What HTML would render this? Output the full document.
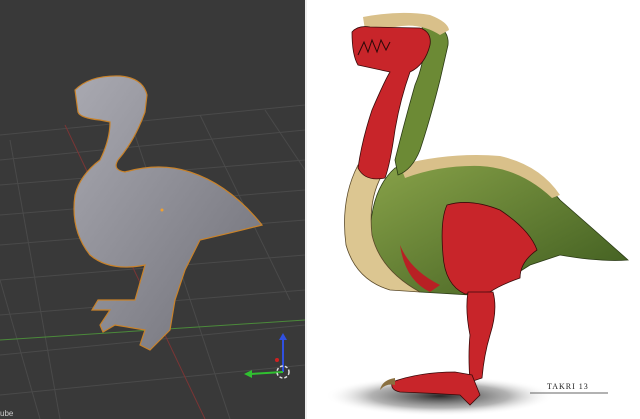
<!DOCTYPE html>
<html><head><style>
html,body{margin:0;padding:0;width:640px;height:419px;overflow:hidden;background:#fff;font-family:"Liberation Sans",sans-serif}
</style></head><body>
<svg width="640" height="419" viewBox="0 0 640 419" xmlns="http://www.w3.org/2000/svg">
<defs>
<linearGradient id="g1" x1="0" y1="0" x2="1" y2="1"><stop offset="0" stop-color="#a9a9b1"/><stop offset="1" stop-color="#6f6f77"/></linearGradient>
<radialGradient id="sh" cx="0.5" cy="0.5" r="0.5"><stop offset="0" stop-color="#111" stop-opacity="0.9"/><stop offset="0.6" stop-color="#666" stop-opacity="0.5"/><stop offset="1" stop-color="#fff" stop-opacity="0"/></radialGradient>
<linearGradient id="gr" x1="0" y1="0" x2="1" y2="1"><stop offset="0" stop-color="#8aa44a"/><stop offset="1" stop-color="#3d5a1e"/></linearGradient>
</defs>
<rect x="0" y="0" width="305" height="419" fill="#393939"/>
<g stroke="#4a4a4a" stroke-width="1" fill="none">
<path d="M0 135 L305 105"/><path d="M0 160 L305 130"/><path d="M0 185 L305 160"/><path d="M0 215 L305 190"/><path d="M0 245 L305 220"/><path d="M0 280 L305 255"/><path d="M0 315 L305 290"/><path d="M0 355 L305 325"/><path d="M0 395 L305 365"/>
<path d="M10 140 L60 419"/><path d="M130 120 L230 419"/><path d="M200 115 L290 300"/><path d="M265 110 L305 170"/><path d="M0 280 L40 419"/>
</g>
<path d="M65 125 L205 419" stroke="#7a3535" stroke-width="1"/>
<path d="M0 340 L305 320" stroke="#4b8a3a" stroke-width="1"/>
<path d="M75 90 Q90 75 120 76 Q143 78 147 95 L145 112 Q135 140 118 160 Q112 170 125 172 Q160 162 190 172 Q230 185 262 225 Q235 232 200 240 L185 270 L175 300 L170 330 L150 350 L140 345 L145 330 L115 325 L103 332 L100 325 L110 310 L92 310 L98 300 L135 300 L145 265 Q110 272 90 255 Q70 230 75 195 Q80 175 100 160 Q110 140 110 122 L100 120 Q80 118 78 112 Z" fill="url(#g1)" stroke="#c8822a" stroke-width="1.2"/>
<circle cx="162" cy="210" r="1.5" fill="#f0a030"/>
<line x1="283" y1="372" x2="283" y2="337" stroke="#3050e0" stroke-width="2"/>
<polygon points="279,340 283,333 287,340" fill="#3050e0"/>
<line x1="283" y1="372" x2="250" y2="374" stroke="#30c030" stroke-width="2"/>
<polygon points="252,370 244,374 252,378" fill="#30c030"/>
<circle cx="277" cy="360" r="2" fill="#d02020"/>
<circle cx="283" cy="372" r="6" fill="none" stroke="#ddd" stroke-width="1.5" stroke-dasharray="3 2"/>
<text x="0" y="416" font-size="8" fill="#ccc">ube</text>
<rect x="305" y="0" width="2" height="419" fill="#eee"/>
<ellipse cx="440" cy="396" rx="115" ry="20" fill="url(#sh)"/>
<!-- body green -->
<path d="M395 168 Q440 155 490 157 Q530 162 560 200 Q600 235 628 260 Q600 262 560 255 L530 265 Q500 285 470 295 L420 292 Q380 280 370 240 Q370 190 395 168 Z" fill="url(#gr)" stroke="#2a3a15" stroke-width="0.8"/>
<path d="M400 165 Q450 152 500 156 Q540 165 560 195 L552 198 Q520 168 480 166 Q440 165 405 178 Z" fill="#d9c08a"/>
<!-- tan chest -->
<path d="M358 165 Q340 200 346 245 Q356 280 390 290 L420 292 Q380 270 372 235 Q368 200 382 175 Z" fill="#dcc691" stroke="#5a4a2a" stroke-width="0.8"/>
<!-- neck green strip -->
<path d="M420 20 Q450 25 448 45 L440 80 Q430 120 420 150 Q412 170 398 175 L395 160 Q405 120 415 85 Q430 50 420 20 Z" fill="#6c8a35" stroke="#2a3a15" stroke-width="0.8"/>
<path d="M363 17 Q400 10 430 15 Q448 22 449 30 L440 35 Q420 22 395 27 L365 30 Z" fill="#d9c08a"/>
<!-- red neck and head -->
<path d="M352 32 Q358 25 370 27 L420 28 Q432 32 430 45 Q425 65 410 72 Q400 100 395 130 Q390 165 385 178 Q365 182 358 168 Q362 140 372 110 Q385 80 390 72 L358 65 Q352 55 352 32 Z" fill="#c8252a" stroke="#3a0a0a" stroke-width="0.8"/>
<path d="M358 55 L364 42 L368 52 L372 40 L377 52 L381 40 L386 50 L390 42" fill="none" stroke="#2a0808" stroke-width="1"/>
<!-- red thigh -->
<path d="M447 205 Q470 198 500 210 Q530 230 537 250 Q520 262 520 278 Q500 285 490 292 L465 294 Q445 285 443 255 Q440 220 447 205 Z" fill="#c8252a" stroke="#3a0a0a" stroke-width="0.8"/>
<path d="M400 245 Q410 270 440 285 L430 292 Q405 280 400 245 Z" fill="#b82024"/>
<!-- lower leg -->
<path d="M468 292 L493 292 Q498 310 490 335 Q484 355 482 378 L470 382 Q468 355 470 335 Q465 310 468 292 Z" fill="#c8252a" stroke="#3a0a0a" stroke-width="0.8"/>
<!-- foot -->
<path d="M392 382 Q420 372 455 372 L472 375 L480 395 L470 405 L460 395 Q430 393 400 392 Q390 390 392 382 Z" fill="#c8252a" stroke="#3a0a0a" stroke-width="0.8"/>
<path d="M395 378 Q382 380 380 390 Q386 383 395 385 Z" fill="#8a7040"/>
<text x="547" y="389" font-size="8" font-family="Liberation Serif" fill="#222" letter-spacing="1">TAKRI 13</text>
<line x1="530" y1="393" x2="608" y2="393" stroke="#333" stroke-width="0.8"/>
</svg>
</body></html>
